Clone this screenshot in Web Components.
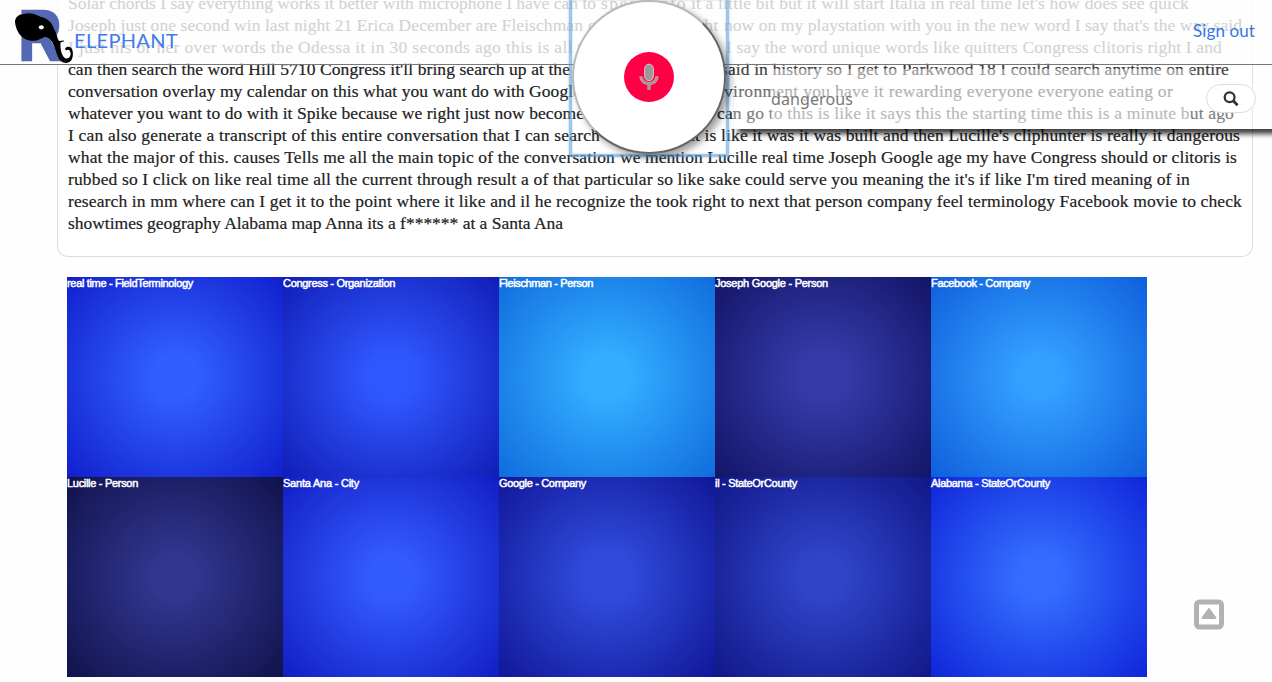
<!DOCTYPE html>
<html lang="en">
<head>
<meta charset="utf-8">
<title>Relephant</title>
<style>
html,body{margin:0;height:682px;overflow:hidden;background:#fefefe}
</style>
</head>
<body>
<relephant-app></relephant-app>
<script>
// Text run whose tracking is adjusted so that it fills a given width.
class FitText extends HTMLElement{
  connectedCallback(){
    const w=+this.getAttribute('w');
    const root=this.attachShadow({mode:'open'});
    root.innerHTML=`<style>:host{display:block;flex:none;white-space:pre;width:${w}px}span{display:inline-block}</style><span><slot></slot></span>`;
    const s=root.querySelector('span'),n=this.textContent.length;
    s.style.letterSpacing=((w-s.getBoundingClientRect().width)/n)+'px';
  }
}
customElements.define('fit-text',FitText);

// Each line is a list of [start, end, text] runs.
const LINES=[
 [[68,596,"Solar chords I say everything works it better with microphone I have can to"],[601,687,"speak into"],[691,1189,"it a little bit but it will start Italia in real time let's how does see quick"]],
 [[68,583,"Joseph just one second win last night 21 Erica December are Fleischman"],[588,598,"o"],[683,719,"right"],[724,1242,"now on my playstation with you in the new word I say that's the way said"]],
 [[68,600,"I just his or her over words the Odessa it in 30 seconds ago this is all the"],[726,1222,"I say the word unique words like quitters Congress clitoris right I and"]],
 [[68,570,"can then search the word Hill 5710 Congress it'll bring search up at the"],[721,1229,"said in history so I get to Parkwood 18 I could search anytime on entire"]],
 [[68,581,"conversation overlay my calendar on this what you want do with Google"],[707,1173,"environment you have it rewarding everyone everyone eating or"]],
 [[68,584,"whatever you want to do with it Spike because we right just now become"],[717,1234,"can go to this is like it says this the starting time this is a minute but ago"]],
 [[68,600,"I can also generate a transcript of this entire conversation that I can search"],[690,1240,"it is like it was it was built and then Lucille's cliphunter is really it dangerous"]],
 [[68,615,"what the major of this. causes Tells me all the main topic of the conversation"],[620,1237,"we mention Lucille real time Joseph Google age my have Congress should or clitoris is"]],
 [[68,1190,"rubbed so I click on like real time all the current through result a of that particular so like sake could serve you meaning the it's if like I'm tired meaning of in"]],
 [[68,1242,"research in mm where can I get it to the point where it like and il he recognize the took right to next that person company feel terminology Facebook movie to check"]],
 [[68,563,"showtimes geography Alabama map Anna its a f****** at a Santa Ana"]]
];
customElements.define('transcript-card',class extends HTMLElement{
  connectedCallback(){
    this.attachShadow({mode:'open'}).innerHTML=`<style>
    :host{display:block;box-sizing:border-box;margin:-9px 19px 0 57px;width:1196px;height:266px;border:1px solid #ddd;border-top:0;border-radius:0 0 11px 11px;padding:1px 0 0 10px;background:#fff;font:17.5px/22px "Liberation Serif",serif;color:#222;-webkit-text-stroke:.2px #222}
    .l{display:flex;height:22px}</style>`+LINES.map(l=>{let p=68;return '<div class="l">'+l.map(([a,b,t])=>{const m=a-p;p=b;return `<fit-text w="${b-a}" style="margin-left:${m}px">${t}</fit-text>`}).join('')+'</div>'}).join('');
  }
});

customElements.define('topic-tile',class extends HTMLElement{
  connectedCallback(){
    const [c,e]=this.getAttribute('tone').split(' ');
    this.attachShadow({mode:'open'}).innerHTML=`<style>
    :host{display:block;height:200px;background:radial-gradient(circle farthest-corner at 50% 50%,${c} 15%,${e} 110%);color:#fff;font:11px/13px "Liberation Sans",sans-serif;-webkit-text-stroke:.5px #fff}</style><fit-text w="${this.getAttribute('w')}">${this.getAttribute('label')}</fit-text>`;
  }
});
const TILES=[["real time - FieldTerminology",126,"#315eff #0d18c6"],["Congress - Organization",112,"#3057ff #0d17ad"],["Fleischman - Person",94,"#33adff #0c64d9"],["Joseph Google - Person",113,"#343ba8 #0f105f"],["Facebook - Company",99,"#339fff #0b57d8"],
["Lucille - Person",71,"#31368f #0d0e43"],["Santa Ana - City",76,"#335aff #0d17bd"],["Google - Company",87,"#304bdc #0d118f"],["il - StateOrCounty",82,"#3044c8 #0d1280"],["Alabama - StateOrCounty",119,"#336cff #0b1dd5"]];
customElements.define('topic-grid',class extends HTMLElement{
  connectedCallback(){
    this.attachShadow({mode:'open'}).innerHTML=`<style>:host{display:grid;grid-template-columns:repeat(5,216px);margin:20px 0 0 67px}</style>`+TILES.map(([t,w,c])=>`<topic-tile label="${t}" w="${w}" tone="${c}"></topic-tile>`).join('');
  }
});

customElements.define('app-header',class extends HTMLElement{
  connectedCallback(){
    this.attachShadow({mode:'open'}).innerHTML=`<style>
    :host{position:absolute;top:0;left:0;width:1272px;height:65px;box-sizing:border-box;border-bottom:1px solid #777;background:rgba(254,254,254,.8);display:flex;justify-content:space-between;font-family:Lato,sans-serif;color:#4179ef}
    svg{display:block;width:74px;height:64px}
    .b{display:flex}.n{font-size:20px;line-height:24px;padding-top:28px}
    .o{font-size:17px;line-height:20px;padding:21px 17px 0 0;color:#3b76e8}</style>
    <div class="b"><svg viewBox="0 0 74 64"><text x="18.5" y="60" font-family="Liberation Sans" font-weight="700" font-size="71" fill="#5568b3" stroke="#5568b3" stroke-width="2.5" textLength="43" lengthAdjust="spacingAndGlyphs">R</text>
    <path d="M15 22C15 17 19 14 24 14C30 12 37 15 41 17C48 18 52 23 54 29C57 34 57 38 59 41L64 40.5L64 41.3L60.5 42.5C60 50 62 57 66 58.5C71 59 72 52 69 50C67 49 67 51 65.5 50C64 47 70 45 72 49C74 54 73 63 66 63C58 63 57 53 54 46C52 41 50 38 46 37C42 37 43 39 41 38.5C36 42 29 41 25 39C20 36 16 31 15 22Z"/><ellipse cx="41.3" cy="27.3" rx="2.5" ry="2.1" fill="#fff"/></svg>
    <div class="n"><fit-text w="104">ELEPHANT</fit-text></div></div><div class="o"><fit-text w="62">Sign out</fit-text></div>`;
  }
});

customElements.define('search-panel',class extends HTMLElement{
  connectedCallback(){
    this.attachShadow({mode:'open'}).innerHTML=`<style>
    :host{position:absolute;left:734px;top:65px;width:538px;height:64px;background:linear-gradient(rgba(255,255,255,.08),rgba(255,255,255,.36) 45%,rgba(255,255,255,.45));box-shadow:5px 4px 5px 1px rgba(0,0,0,.75);display:flex;align-items:flex-start}
    .i{box-sizing:border-box;width:420px;height:59px;margin:4px 0 0 37px;background:rgba(255,255,255,.46);padding-top:19px;font:16px/22px "Noto Sans",sans-serif;color:#777}
    .btn{box-sizing:border-box;width:50px;height:29px;margin:19px 0 0 15px;border:1px solid #ddd;border-radius:15px;background:#fff;display:flex;justify-content:center;align-items:center}
    svg{width:16px;height:16px;margin-right:1px}</style>
    <div class="i"><fit-text w="82">dangerous</fit-text></div><div class="btn"><svg viewBox="0 0 16 16" fill="none" stroke="#333" stroke-width="2.3"><circle cx="6.6" cy="6.3" r="4.9"/><path d="M10.2 9.8L14.6 14.2" stroke-width="2.8"/></svg></div>`;
  }
});

customElements.define('mic-button',class extends HTMLElement{
  connectedCallback(){
    this.attachShadow({mode:'open'}).innerHTML=`<style>
    :host{position:absolute;left:569px;top:-3px;width:160px;height:160px;box-sizing:border-box;border:3px solid rgba(95,160,218,.6);box-shadow:0 0 2px rgba(95,160,218,.6),inset 0 0 2px rgba(95,160,218,.6)}
    .c{box-sizing:border-box;width:154px;height:154px;border-radius:50%;border:2px solid;border-color:#b9b9b9 #666 #666 #b9b9b9;background:#fff;box-shadow:4px 4px 7px rgba(0,0,0,.38);display:flex;align-items:center;justify-content:center}
    .r{width:50px;height:50px;border-radius:50%;background:#ff0045;display:flex;align-items:center;justify-content:center}
    svg{width:20px;height:28px}</style><div class="c"><div class="r"><svg viewBox="0 0 20 28" fill="none"><g stroke="#d8b8bd" stroke-width="3"><path d="M1.8 13.5Q3 20.5 10 20.5T18.2 13.5M10 20V27"/></g><path d="M1.8 13.5Q3 20.5 10 20.5T18.2 13.5M10 20V27" stroke="#999" stroke-width="1.8"/><rect x="5.7" y="1.2" width="8.6" height="16.5" rx="4.3" fill="#999" stroke="#dcc8cb"/></svg></div></div>`;
  }
});

customElements.define('to-top',class extends HTMLElement{
  connectedCallback(){
    this.attachShadow({mode:'open'}).innerHTML=`<style>:host{position:absolute;left:1194px;top:599px;width:30px;height:31px}svg{display:block}</style><svg width="30" height="31"><rect x="2.5" y="3" width="25" height="25" rx="3" fill="#fff" stroke="#b2b2b2" stroke-width="5"/><path d="M15 10L21.5 19H8.5Z" fill="#b2b2b2" stroke="#b2b2b2" stroke-width="2" stroke-linejoin="round"/></svg>`;
  }
});

customElements.define('relephant-app',class extends HTMLElement{
  connectedCallback(){
    this.attachShadow({mode:'open'}).innerHTML=`<style>:host{display:flow-root;position:relative;width:1272px;height:682px;overflow:hidden}</style>
    <transcript-card></transcript-card><topic-grid></topic-grid><search-panel></search-panel><app-header></app-header><mic-button></mic-button><to-top></to-top>`;
  }
});
</script>
</body>
</html>
